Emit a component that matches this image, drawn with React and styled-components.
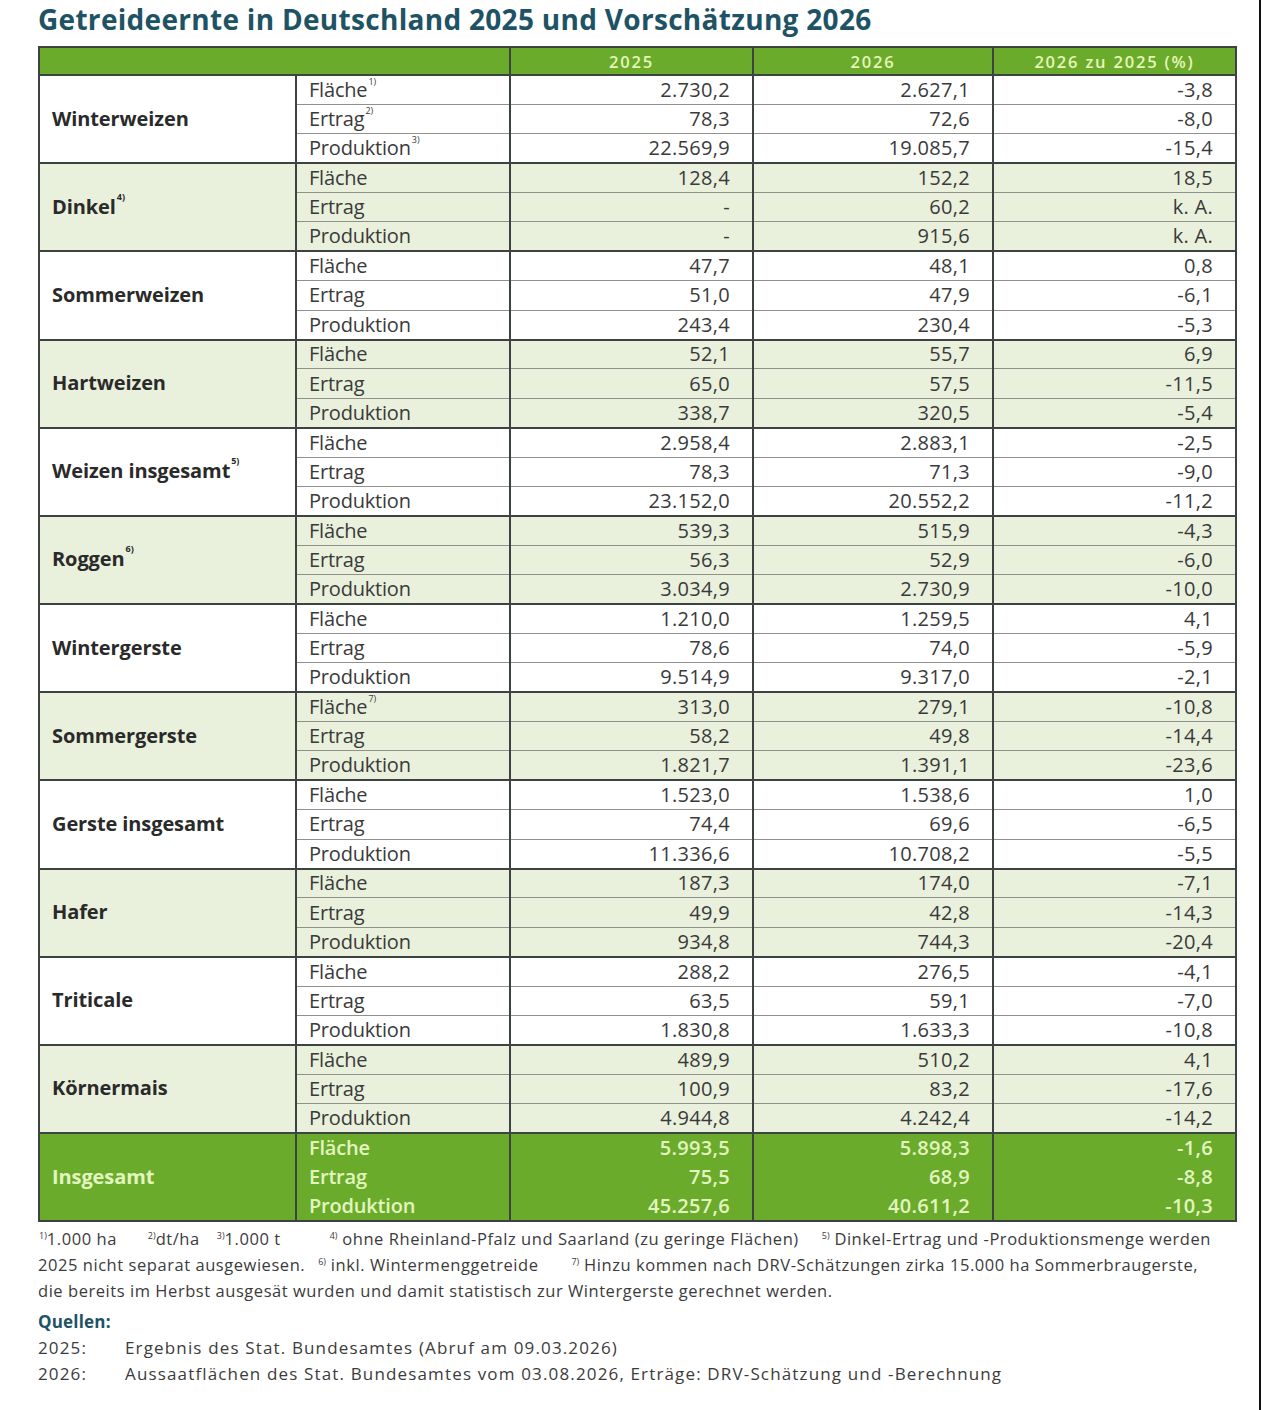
import React from "react";
import styled, { createGlobalStyle } from "styled-components";

const GlobalStyle = createGlobalStyle`
  body {
    margin: 0;
    background: #fff;
    font-family: "Open Sans", "Noto Sans", sans-serif;
  }
`;

const groups = [
  {
    name: "Winterweizen",
    rows: [
      ["Fläche", "1)", "2.730,2", "2.627,1", "-3,8"],
      ["Ertrag", "2)", "78,3", "72,6", "-8,0"],
      ["Produktion", "3)", "22.569,9", "19.085,7", "-15,4"],
    ],
  },
  {
    name: "Dinkel",
    sup: "4)",
    shaded: true,
    rows: [
      ["Fläche", "", "128,4", "152,2", "18,5"],
      ["Ertrag", "", "-", "60,2", "k. A."],
      ["Produktion", "", "-", "915,6", "k. A."],
    ],
  },
  {
    name: "Sommerweizen",
    rows: [
      ["Fläche", "", "47,7", "48,1", "0,8"],
      ["Ertrag", "", "51,0", "47,9", "-6,1"],
      ["Produktion", "", "243,4", "230,4", "-5,3"],
    ],
  },
  {
    name: "Hartweizen",
    shaded: true,
    rows: [
      ["Fläche", "", "52,1", "55,7", "6,9"],
      ["Ertrag", "", "65,0", "57,5", "-11,5"],
      ["Produktion", "", "338,7", "320,5", "-5,4"],
    ],
  },
  {
    name: "Weizen insgesamt",
    sup: "5)",
    rows: [
      ["Fläche", "", "2.958,4", "2.883,1", "-2,5"],
      ["Ertrag", "", "78,3", "71,3", "-9,0"],
      ["Produktion", "", "23.152,0", "20.552,2", "-11,2"],
    ],
  },
  {
    name: "Roggen",
    sup: "6)",
    shaded: true,
    rows: [
      ["Fläche", "", "539,3", "515,9", "-4,3"],
      ["Ertrag", "", "56,3", "52,9", "-6,0"],
      ["Produktion", "", "3.034,9", "2.730,9", "-10,0"],
    ],
  },
  {
    name: "Wintergerste",
    rows: [
      ["Fläche", "", "1.210,0", "1.259,5", "4,1"],
      ["Ertrag", "", "78,6", "74,0", "-5,9"],
      ["Produktion", "", "9.514,9", "9.317,0", "-2,1"],
    ],
  },
  {
    name: "Sommergerste",
    shaded: true,
    rows: [
      ["Fläche", "7)", "313,0", "279,1", "-10,8"],
      ["Ertrag", "", "58,2", "49,8", "-14,4"],
      ["Produktion", "", "1.821,7", "1.391,1", "-23,6"],
    ],
  },
  {
    name: "Gerste insgesamt",
    rows: [
      ["Fläche", "", "1.523,0", "1.538,6", "1,0"],
      ["Ertrag", "", "74,4", "69,6", "-6,5"],
      ["Produktion", "", "11.336,6", "10.708,2", "-5,5"],
    ],
  },
  {
    name: "Hafer",
    shaded: true,
    rows: [
      ["Fläche", "", "187,3", "174,0", "-7,1"],
      ["Ertrag", "", "49,9", "42,8", "-14,3"],
      ["Produktion", "", "934,8", "744,3", "-20,4"],
    ],
  },
  {
    name: "Triticale",
    rows: [
      ["Fläche", "", "288,2", "276,5", "-4,1"],
      ["Ertrag", "", "63,5", "59,1", "-7,0"],
      ["Produktion", "", "1.830,8", "1.633,3", "-10,8"],
    ],
  },
  {
    name: "Körnermais",
    shaded: true,
    rows: [
      ["Fläche", "", "489,9", "510,2", "4,1"],
      ["Ertrag", "", "100,9", "83,2", "-17,6"],
      ["Produktion", "", "4.944,8", "4.242,4", "-14,2"],
    ],
  },
  {
    name: "Insgesamt",
    total: true,
    rows: [
      ["Fläche", "", "5.993,5", "5.898,3", "-1,6"],
      ["Ertrag", "", "75,5", "68,9", "-8,8"],
      ["Produktion", "", "45.257,6", "40.611,2", "-10,3"],
    ],
  },
];

const GREEN = "#6aab2c";
const PALE = "#e9f0dc";
const LINE = "#3d4242";
const INNER = "#8e928b";

const Page = styled.div`
  width: 1261px;
  height: 1410px;
  border-right: 2px solid #111;
  box-sizing: border-box;
  padding: 2px 0 0 38px;
  display: flex;
  flex-direction: column;
`;

const Title = styled.h1`
  margin: 0 0 9px;
  font-size: 28px;
  line-height: 35px;
  font-weight: 700;
  letter-spacing: 0.3px;
  color: #1e5365;
`;

const Table = styled.table`
  width: 1197px;
  border-collapse: collapse;
  table-layout: fixed;
  border: 2px solid ${LINE};
  font-size: 20px;
  letter-spacing: -0.2px;
  color: #3a3a3a;
`;

const HeadRow = styled.tr`
  height: 28px;
  background: ${GREEN};
`;

const HeadCell = styled.th`
  padding: 0;
  font-size: 16.5px;
  font-weight: 600;
  letter-spacing: 1.8px;
  color: #e6f6b8;
  text-align: center;
  border-left: 2px solid ${LINE};
  &:first-child {
    border-left: none;
  }
`;

const Row = styled.tr`
  height: 29.4px;
  background: ${(p) => (p.$total ? GREEN : p.$shaded ? PALE : "#fff")};
  color: ${(p) => (p.$total ? "#e3f5bf" : "inherit")};
  border-top: ${(p) => (p.$first ? `2px solid ${LINE}` : "none")};
`;

const GroupCell = styled.td`
  padding: 0 0 2px 12px;
  font-weight: 700;
  font-size: 20px;
  letter-spacing: -0.1px;
  color: ${(p) => (p.$total ? "#e3f5bf" : "#2a2a2a")};
  border-right: 2px solid ${LINE};
  vertical-align: middle;
`;

const LabelCell = styled.td`
  padding: 0 0 0 12px;
  line-height: 1;
  border-top: ${(p) => (p.$inner ? `1px solid ${INNER}` : "none")};
  font-weight: ${(p) => (p.$total ? 600 : 400)};
`;

const NumCell = styled.td`
  padding: 0 22px 0 0;
  text-align: right;
  line-height: 1;
  letter-spacing: 0.3px;
  border-left: 2px solid ${LINE};
  border-top: ${(p) => (p.$inner ? `1px solid ${INNER}` : "none")};
  font-weight: ${(p) => (p.$total ? 600 : 400)};
`;

const Sup = styled.sup`
  font-size: 9px;
  vertical-align: top;
  position: relative;
  top: -3px;
  margin-left: 1px;
  letter-spacing: 0;
`;

const Notes = styled.div`
  margin-top: 4px;
  font-size: 16.5px;
  line-height: 26px;
  letter-spacing: 0.55px;
  color: #3b3b3b;
`;

const NoteLine = styled.div`
  white-space: nowrap;
`;

const Gap = styled.span`
  display: inline-block;
  width: ${(p) => p.$w}px;
`;

const Sources = styled.div`
  margin-top: 5px;
  font-size: 17px;
  line-height: 26px;
  letter-spacing: 1.15px;
  color: #3b3b3b;
`;

const SourcesHead = styled.div`
  font-weight: 700;
  color: #1e5365;
  letter-spacing: 0.2px;
`;

const SourceRow = styled.div`
  display: grid;
  grid-template-columns: 87px auto;
  white-space: nowrap;
`;

function Group({ g }) {
  return g.rows.map((r, i) => {
    const inner = i > 0 && !g.total;
    return (
      <Row key={i} $first={i === 0} $shaded={g.shaded} $total={g.total}>
        {i === 0 && (
          <GroupCell rowSpan={3} $total={g.total}>
            {g.name}
            {g.sup && <Sup>{g.sup}</Sup>}
          </GroupCell>
        )}
        <LabelCell $inner={inner} $total={g.total}>
          {r[0]}
          {r[1] && <Sup>{r[1]}</Sup>}
        </LabelCell>
        <NumCell $inner={inner} $total={g.total}>{r[2]}</NumCell>
        <NumCell $inner={inner} $total={g.total}>{r[3]}</NumCell>
        <NumCell $inner={inner} $total={g.total}>{r[4]}</NumCell>
      </Row>
    );
  });
}

export default function App() {
  return (
    <>
      <GlobalStyle />
      <Page>
        <Title>Getreideernte in Deutschland 2025 und Vorschätzung 2026</Title>
        <Table>
          <colgroup>
            <col style={{ width: 257 }} />
            <col style={{ width: 214 }} />
            <col style={{ width: 243 }} />
            <col style={{ width: 240 }} />
            <col style={{ width: 243 }} />
          </colgroup>
          <thead>
            <HeadRow>
              <HeadCell colSpan={2}></HeadCell>
              <HeadCell>2025</HeadCell>
              <HeadCell>2026</HeadCell>
              <HeadCell>2026 zu 2025 (%)</HeadCell>
            </HeadRow>
          </thead>
          <tbody>
            {groups.map((g) => (
              <Group key={g.name} g={g} />
            ))}
          </tbody>
        </Table>
        <Notes>
          <NoteLine>
            <Sup>1)</Sup>1.000 ha<Gap $w={30} />
            <Sup>2)</Sup>dt/ha<Gap $w={16} />
            <Sup>3)</Sup>1.000 t<Gap $w={48} />
            <Sup>4)</Sup> ohne Rheinland-Pfalz und Saarland (zu geringe Flächen)<Gap $w={22} />
            <Sup>5)</Sup> Dinkel-Ertrag und -Produktionsmenge werden
          </NoteLine>
          <NoteLine>
            2025 nicht separat ausgewiesen.<Gap $w={12} />
            <Sup>6)</Sup> inkl. Wintermenggetreide<Gap $w={32} />
            <Sup>7)</Sup> Hinzu kommen nach DRV-Schätzungen zirka 15.000 ha Sommerbraugerste,
          </NoteLine>
          <NoteLine>
            die bereits im Herbst ausgesät wurden und damit statistisch zur Wintergerste gerechnet werden.
          </NoteLine>
        </Notes>
        <Sources>
          <SourcesHead>Quellen:</SourcesHead>
          <SourceRow>
            <span>2025:</span>
            <span>Ergebnis des Stat. Bundesamtes (Abruf am 09.03.2026)</span>
          </SourceRow>
          <SourceRow>
            <span>2026:</span>
            <span>
              Aussaatflächen des Stat. Bundesamtes vom 03.08.2026, Erträge: DRV-Schätzung und -Berechnung
            </span>
          </SourceRow>
        </Sources>
      </Page>
    </>
  );
}
